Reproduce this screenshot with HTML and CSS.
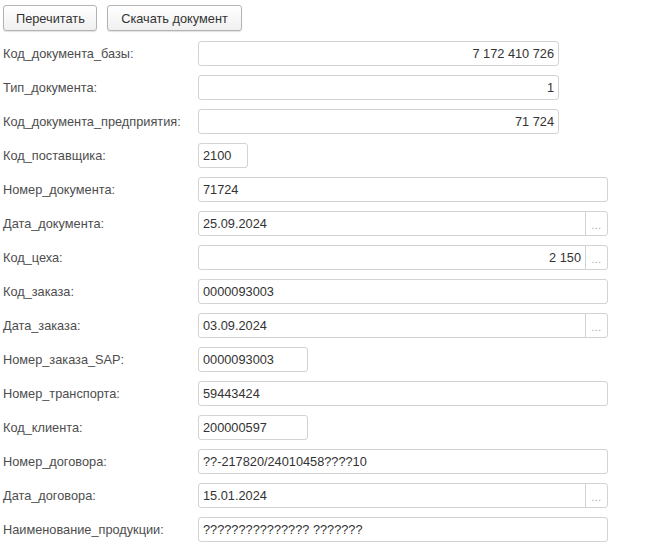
FILE: index.html
```html
<!DOCTYPE html>
<html lang="ru">
<head>
<meta charset="utf-8">
<link rel="stylesheet" href="styles.css">
</head>
<body>
<div class="page">
  <div class="toolbar">
    <button class="btn">Перечитать</button>
    <button class="btn">Скачать документ</button>
  </div>
  <div class="form">
    <div class="label">Код_документа_базы:</div>
    <div class="field w-wide num"><span class="val">7 172 410 726</span></div>

    <div class="label">Тип_документа:</div>
    <div class="field w-wide num"><span class="val">1</span></div>

    <div class="label">Код_документа_предприятия:</div>
    <div class="field w-wide num"><span class="val">71 724</span></div>

    <div class="label">Код_поставщика:</div>
    <div class="field w-small"><span class="val">2100</span></div>

    <div class="label">Номер_документа:</div>
    <div class="field w-full"><span class="val">71724</span></div>

    <div class="label">Дата_документа:</div>
    <div class="field w-full"><span class="val">25.09.2024</span><span class="pick">...</span></div>

    <div class="label">Код_цеха:</div>
    <div class="field w-full num"><span class="val">2 150</span><span class="pick">...</span></div>

    <div class="label">Код_заказа:</div>
    <div class="field w-full"><span class="val">0000093003</span></div>

    <div class="label">Дата_заказа:</div>
    <div class="field w-full"><span class="val">03.09.2024</span><span class="pick">...</span></div>

    <div class="label">Номер_заказа_SAP:</div>
    <div class="field w-mid"><span class="val">0000093003</span></div>

    <div class="label">Номер_транспорта:</div>
    <div class="field w-full"><span class="val">59443424</span></div>

    <div class="label">Код_клиента:</div>
    <div class="field w-mid"><span class="val">200000597</span></div>

    <div class="label">Номер_договора:</div>
    <div class="field w-full"><span class="val">??-217820/24010458????10</span></div>

    <div class="label">Дата_договора:</div>
    <div class="field w-full"><span class="val">15.01.2024</span><span class="pick">...</span></div>

    <div class="label">Наименование_продукции:</div>
    <div class="field w-full"><span class="val">??????????????? ???????</span></div>
  </div>
</div>
</body>
</html>
```
FILE: styles.css
```css
html, body {
  margin: 0;
  padding: 0;
  background: #ffffff;
}
body {
  font-family: "Liberation Sans", Arial, sans-serif;
  font-size: 12.75px;
  color: #4d4d4d;
}
.page {
  padding: 5px 3px;
}
.toolbar {
  display: flex;
  gap: 10px;
  height: 26px;
}
.btn {
  font-family: "Liberation Sans", Arial, sans-serif;
  font-size: 12.75px;
  color: #333333;
  height: 26px;
  padding: 0 12px;
  border: 1px solid #b3b3b3;
  border-radius: 3px;
  background: linear-gradient(#ffffff, #f0f0f0);
  box-shadow: 0 1px 1px rgba(0,0,0,0.12);
}
.btn:first-child { width: 94px; }
.btn:nth-child(2) { width: 135px; }
.form {
  margin-top: 10px;
  display: grid;
  grid-template-columns: 195px 1fr;
  row-gap: 9px;
  align-items: center;
}
.label {
  line-height: 25px;
  white-space: nowrap;
}
.field {
  box-sizing: border-box;
  height: 25px;
  border: 1px solid #d3d3d3;
  border-radius: 3px;
  display: flex;
  align-items: center;
  color: #333333;
  background: #fff;
}
.field .val {
  flex: 1;
  padding: 0 4px 0 4px;
  white-space: nowrap;
  overflow: hidden;
}
.field.num .val {
  text-align: right;
}
.pick {
  box-sizing: border-box;
  width: 22px;
  height: 100%;
  border-left: 1px solid #d3d3d3;
  color: #a0a0a0;
  font-size: 10px;
  display: flex;
  align-items: center;
  justify-content: center;
  padding-top: 3px;
  letter-spacing: 0.5px;
}
.w-wide { width: 361px; }
.w-full { width: 410px; }
.w-small { width: 50px; }
.w-mid { width: 110px; }
```
